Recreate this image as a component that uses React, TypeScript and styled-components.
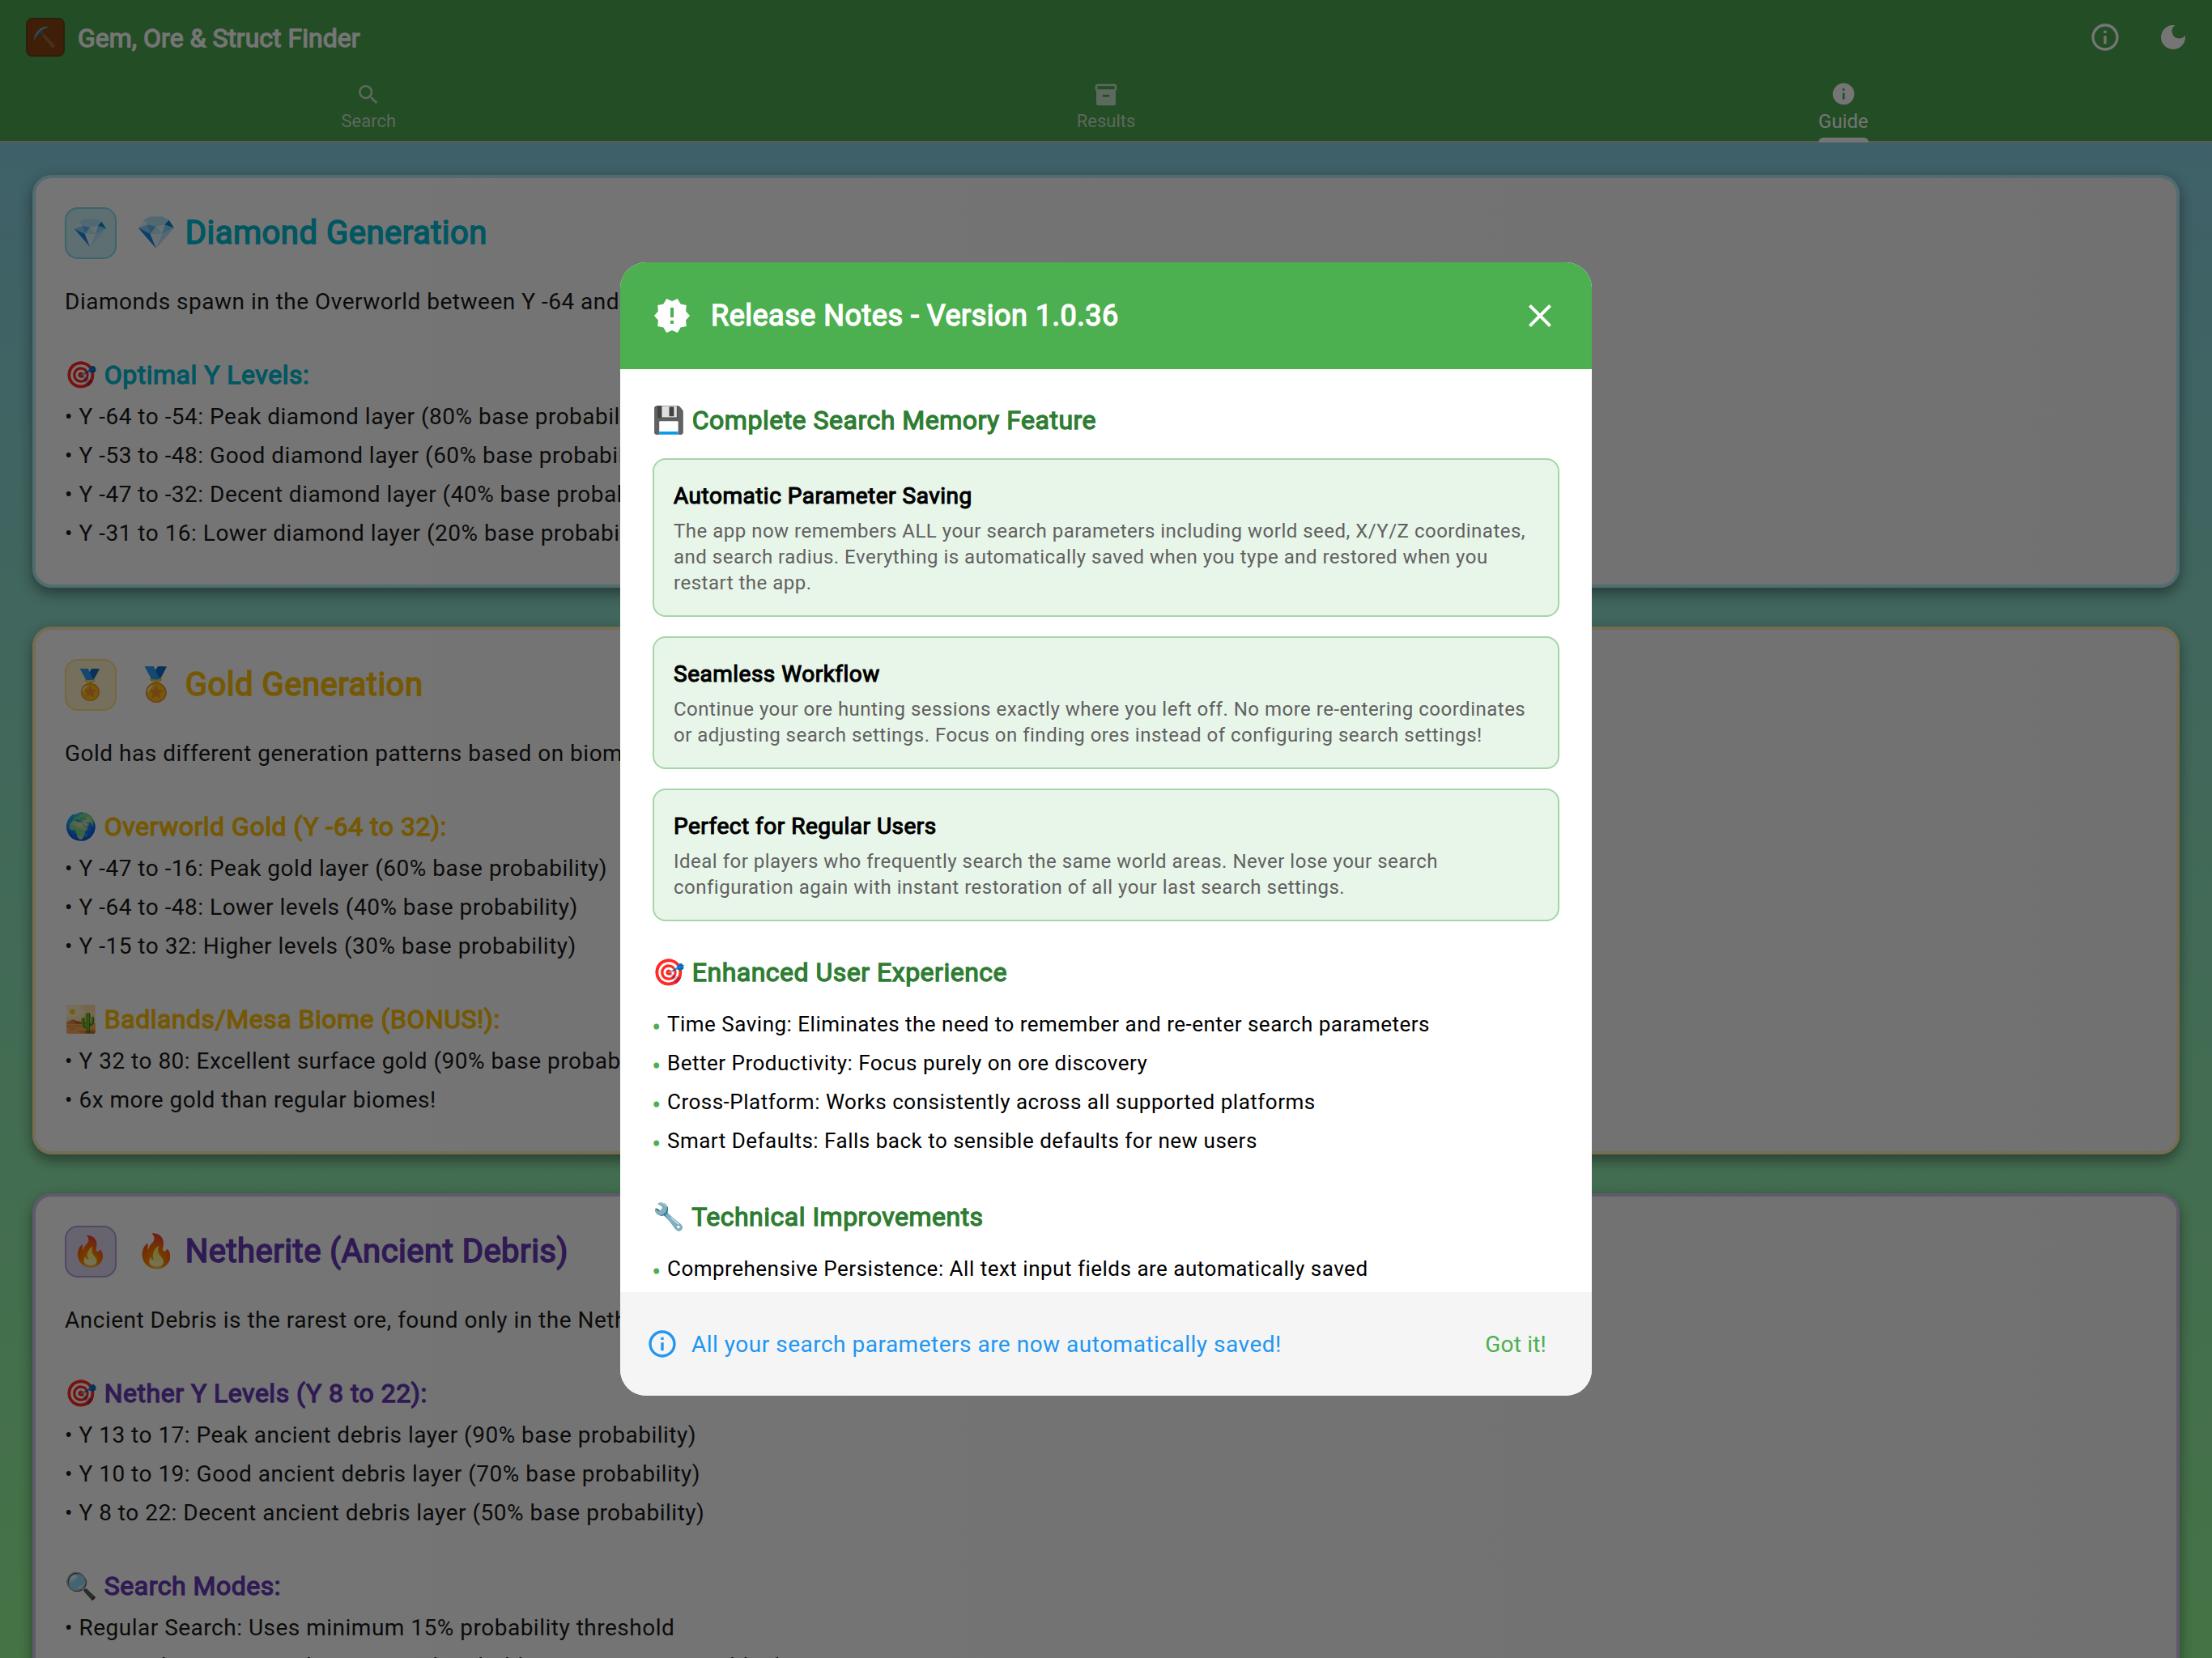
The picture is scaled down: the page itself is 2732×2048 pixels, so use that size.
import React from "react";
import styled, { createGlobalStyle, css } from "styled-components";
import {
  MdClose,
  MdDarkMode,
  MdInfo,
  MdInfoOutline,
  MdInventory2,
  MdNewReleases,
  MdSearch,
} from "react-icons/md";

const GlobalStyle = createGlobalStyle`
  * { box-sizing: border-box; }
  html, body { margin: 0; padding: 0; height: 100%; overflow: hidden; }
  #root { height: 100%; }
  body {
    font-family: Roboto, "Noto Color Emoji", sans-serif;
    font-weight: 400;
    font-size: 28px;
    line-height: 42px;
    letter-spacing: 0.5px;
    color: #1a1a1a;
  }
  h1, h2, h3, h4, p, ul { margin: 0; padding: 0; font-weight: 400; }
  svg { display: block; flex: none; }
`;

const heavy = css`
  -webkit-text-stroke: 0.04em currentColor;
`;

const Screen = styled.div`
  position: relative;
  display: flex;
  flex-direction: column;
  height: 2048px;
  overflow: hidden;
  background: linear-gradient(to bottom, #87ceeb, #98fb98);
`;

const AppBar = styled.header`
  flex: none;
  height: 176px;
  background: #4ca850;
  border-bottom: 2px solid #cac4b8;
  color: #fff;
`;

const Toolbar = styled.div`
  display: flex;
  align-items: center;
  height: 92px;
  padding: 0 28px 0 32px;
`;

const Logo = styled.div`
  display: flex;
  align-items: center;
  justify-content: center;
  width: 48px;
  height: 48px;
  margin-right: 16px;
  border: 2px solid #654321;
  border-radius: 8px;
  background: #8b4513;
  font-size: 24px;
  line-height: 1;
`;

const AppTitle = styled.h1`
  flex: 1;
  padding-top: 2px;
  font-size: 32px;
  letter-spacing: 0;
  ${heavy}
`;

const Actions = styled.div`
  display: flex;
  gap: 44px;
`;

const Tabs = styled.nav`
  display: grid;
  grid-template-columns: repeat(3, 1fr);
  height: 84px;
`;

const Tab = styled.div<{ $active?: boolean }>`
  display: flex;
  flex-direction: column;
  align-items: center;
  padding-top: ${(p) => (p.$active ? 8 : 9)}px;
  letter-spacing: 0;
  font-size: ${(p) => (p.$active ? 24 : 22)}px;
  line-height: ${(p) => (p.$active ? 36 : 34)}px;
  color: ${(p) => (p.$active ? "#fff" : "rgba(255,255,255,0.7)")};
`;

const Indicator = styled.span`
  width: 62px;
  height: 6px;
  margin-top: 2px;
  border-radius: 6px 6px 0 0;
  background: #fff;
`;

const Content = styled.main`
  display: flex;
  flex-direction: column;
  gap: 48px;
  padding: 40px;
`;

const Card = styled.section<{ $rgb: string }>`
  flex: none;
  padding: 36px;
  border: 4px solid transparent;
  border-radius: 24px;
  background:
    linear-gradient(to right, #fff, #f7f7f7) padding-box,
    linear-gradient(rgba(${(p) => p.$rgb}, 0.3), rgba(${(p) => p.$rgb}, 0.3)) border-box,
    linear-gradient(#fff, #fff) border-box;
  box-shadow: 0 8px 16px rgba(0, 0, 0, 0.34), 0 2px 20px rgba(0, 0, 0, 0.1);
`;

const CardHeader = styled.div`
  display: flex;
  align-items: center;
  gap: 24px;
  margin-bottom: 32px;
`;

const Badge = styled.div<{ $rgb: string }>`
  display: flex;
  align-items: center;
  justify-content: center;
  width: 64px;
  height: 64px;
  border: 2px solid rgba(${(p) => p.$rgb}, 0.5);
  border-radius: 16px;
  background: rgba(${(p) => p.$rgb}, 0.2);
  background-clip: padding-box;
  font-size: 36px;
  letter-spacing: 0;
`;

const CardTitle = styled.h2<{ $rgb: string }>`
  font-size: 40px;
  line-height: 56px;
  color: rgb(${(p) => p.$rgb});
  ${heavy}
`;

const Line = styled.p`
  margin-bottom: 6px;
`;

const SubHeading = styled.h3<{ $rgb: string }>`
  margin: 46px 0 8px;
  font-size: 32px;
  line-height: 46px;
  color: rgb(${(p) => p.$rgb});
  ${heavy}
`;

const Group = styled.div`
  display: flow-root;

  & + & {
    margin-top: -6px;
  }

  & + & ${SubHeading} {
    margin-top: 46px;
  }
`;

const Scrim = styled.div`
  position: absolute;
  inset: 0;
  display: flex;
  align-items: center;
  justify-content: center;
  background: rgba(0, 0, 0, 0.54);
`;

const Dialog = styled.div`
  display: flex;
  flex-direction: column;
  width: 1200px;
  height: 1400px;
  overflow: hidden;
  border-radius: 32px;
  background: #fff;
  color: #000;
`;

const DialogHeader = styled.div`
  display: flex;
  flex: none;
  align-items: center;
  gap: 24px;
  height: 132px;
  padding: 0 40px;
  background: #4caf50;
  color: #fff;
`;

const DialogTitle = styled.h2`
  flex: 1;
  font-size: 36px;
  line-height: 52px;
  ${heavy}
`;

const DialogBody = styled.div`
  flex: 1;
  min-height: 0;
  padding: 40px;
  overflow: hidden;
`;

const SectionTitle = styled.h3<{ $top?: number }>`
  margin: ${(p) => p.$top ?? 0}px 0 20px;
  font-size: 32px;
  line-height: 46px;
  color: #2e7d32;
  ${heavy}
`;

const Features = styled.div`
  display: flex;
  flex-direction: column;
  gap: 24px;
  padding-top: 4px;
`;

const Feature = styled.div`
  padding: 24px;
  border: 2px solid #a5d6a7;
  border-radius: 16px;
  background: #e8f5e9;
`;

const FeatureTitle = styled.h4`
  margin-bottom: 6px;
  font-size: 28px;
  ${heavy}
`;

const FeatureText = styled.p`
  font-size: 24px;
  line-height: 32px;
  color: #616161;
`;

const Points = styled.ul`
  display: flex;
  flex-direction: column;
  gap: 6px;
  list-style: none;
`;

const Point = styled.li`
  display: flex;
  gap: 8px;
  font-size: 26px;
`;

const Dot = styled.span`
  padding-top: 8px;
  font-size: 28px;
  line-height: 34px;
  color: #4caf50;
  ${heavy}
`;

const DialogFooter = styled.div`
  display: flex;
  flex: none;
  align-items: center;
  gap: 16px;
  height: 128px;
  padding: 0 32px;
  background: #f5f5f5;
  color: #2196f3;
`;

const FooterText = styled.span`
  flex: 1;
  padding-top: 2px;
  line-height: 40px;
`;

const TextButton = styled.button`
  padding: 18px 24px 16px;
  border: 0;
  background: none;
  font: inherit;
  line-height: 40px;
  letter-spacing: 0.2px;
  color: #4caf50;
`;

type Guide = {
  emoji: string;
  title: string;
  rgb: string;
  intro: string;
  groups: { heading: string; lines: string[] }[];
};

const guides: Guide[] = [
  {
    emoji: "💎",
    title: "Diamond Generation",
    rgb: "0, 188, 212",
    intro: "Diamonds spawn in the Overworld between Y -64 and Y 16.",
    groups: [
      {
        heading: "🎯 Optimal Y Levels:",
        lines: [
          "Y -64 to -54: Peak diamond layer (80% base probability)",
          "Y -53 to -48: Good diamond layer (60% base probability)",
          "Y -47 to -32: Decent diamond layer (40% base probability)",
          "Y -31 to 16: Lower diamond layer (20% base probability)",
        ],
      },
    ],
  },
  {
    emoji: "🏅",
    title: "Gold Generation",
    rgb: "255, 193, 7",
    intro: "Gold has different generation patterns based on biome.",
    groups: [
      {
        heading: "🌍 Overworld Gold (Y -64 to 32):",
        lines: [
          "Y -47 to -16: Peak gold layer (60% base probability)",
          "Y -64 to -48: Lower levels (40% base probability)",
          "Y -15 to 32: Higher levels (30% base probability)",
        ],
      },
      {
        heading: "🏜️ Badlands/Mesa Biome (BONUS!):",
        lines: [
          "Y 32 to 80: Excellent surface gold (90% base probability)",
          "6x more gold than regular biomes!",
        ],
      },
    ],
  },
  {
    emoji: "🔥",
    title: "Netherite (Ancient Debris)",
    rgb: "103, 58, 183",
    intro: "Ancient Debris is the rarest ore, found only in the Nether.",
    groups: [
      {
        heading: "🎯 Nether Y Levels (Y 8 to 22):",
        lines: [
          "Y 13 to 17: Peak ancient debris layer (90% base probability)",
          "Y 10 to 19: Good ancient debris layer (70% base probability)",
          "Y 8 to 22: Decent ancient debris layer (50% base probability)",
        ],
      },
      {
        heading: "🔍 Search Modes:",
        lines: [
          "Regular Search: Uses minimum 15% probability threshold",
          "Comprehensive Search: Uses 5% threshold to cover maximum blocks",
        ],
      },
    ],
  },
];

const features = [
  {
    title: "Automatic Parameter Saving",
    text: "The app now remembers ALL your search parameters including world seed, X/Y/Z coordinates, and search radius. Everything is automatically saved when you type and restored when you restart the app.",
  },
  {
    title: "Seamless Workflow",
    text: "Continue your ore hunting sessions exactly where you left off. No more re-entering coordinates or adjusting search settings. Focus on finding ores instead of configuring search settings!",
  },
  {
    title: "Perfect for Regular Users",
    text: "Ideal for players who frequently search the same world areas. Never lose your search configuration again with instant restoration of all your last search settings.",
  },
];

const experience = [
  "Time Saving: Eliminates the need to remember and re-enter search parameters",
  "Better Productivity: Focus purely on ore discovery",
  "Cross-Platform: Works consistently across all supported platforms",
  "Smart Defaults: Falls back to sensible defaults for new users",
];

const technical = ["Comprehensive Persistence: All text input fields are automatically saved"];

const PointList = ({ items }: { items: string[] }) => (
  <Points>
    {items.map((item) => (
      <Point key={item}>
        <Dot>•</Dot>
        <span>{item}</span>
      </Point>
    ))}
  </Points>
);

const GuideCard = ({ guide }: { guide: Guide }) => (
  <Card $rgb={guide.rgb}>
    <CardHeader>
      <Badge $rgb={guide.rgb}>{guide.emoji}</Badge>
      <CardTitle $rgb={guide.rgb}>
        {guide.emoji} {guide.title}
      </CardTitle>
    </CardHeader>
    <p>{guide.intro}</p>
    {guide.groups.map((group) => (
      <Group key={group.heading}>
        <SubHeading $rgb={guide.rgb}>{group.heading}</SubHeading>
        {group.lines.map((line) => (
          <Line key={line}>• {line}</Line>
        ))}
      </Group>
    ))}
  </Card>
);

export default function App() {
  return (
    <>
      <GlobalStyle />
      <Screen>
        <AppBar>
          <Toolbar>
            <Logo>⛏️</Logo>
            <AppTitle>Gem, Ore &amp; Struct Finder</AppTitle>
            <Actions>
              <MdInfoOutline size={40} />
              <MdDarkMode size={40} />
            </Actions>
          </Toolbar>
          <Tabs>
            <Tab>
              <MdSearch size={32} />
              Search
            </Tab>
            <Tab>
              <MdInventory2 size={32} />
              Results
            </Tab>
            <Tab $active>
              <MdInfo size={32} />
              Guide
              <Indicator />
            </Tab>
          </Tabs>
        </AppBar>
        <Content>
          {guides.map((guide) => (
            <GuideCard key={guide.title} guide={guide} />
          ))}
        </Content>
        <Scrim>
          <Dialog role="dialog">
            <DialogHeader>
              <MdNewReleases size={48} />
              <DialogTitle>Release Notes - Version 1.0.36</DialogTitle>
              <MdClose size={48} />
            </DialogHeader>
            <DialogBody>
              <SectionTitle>💾 Complete Search Memory Feature</SectionTitle>
              <Features>
                {features.map((feature) => (
                  <Feature key={feature.title}>
                    <FeatureTitle>{feature.title}</FeatureTitle>
                    <FeatureText>{feature.text}</FeatureText>
                  </Feature>
                ))}
              </Features>
              <SectionTitle $top={40}>🎯 Enhanced User Experience</SectionTitle>
              <PointList items={experience} />
              <SectionTitle $top={50}>🔧 Technical Improvements</SectionTitle>
              <PointList items={technical} />
            </DialogBody>
            <DialogFooter>
              <MdInfoOutline size={40} />
              <FooterText>All your search parameters are now automatically saved!</FooterText>
              <TextButton>Got it!</TextButton>
            </DialogFooter>
          </Dialog>
        </Scrim>
      </Screen>
    </>
  );
}
